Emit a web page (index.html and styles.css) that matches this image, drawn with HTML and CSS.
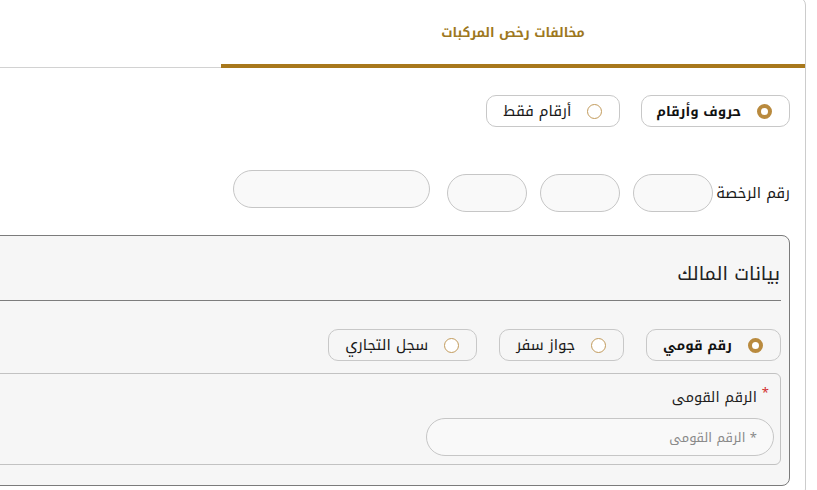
FILE: index.html
```html
<!DOCTYPE html>
<html lang="ar" dir="rtl">
<head>
<meta charset="utf-8">
<title>مخالفات رخص المركبات</title>
<link rel="stylesheet" href="styles.css">
</head>
<body>
<div class="card">
  <div class="tabbar">
    <div class="tab active">مخالفات رخص المركبات</div>
  </div>
  <div class="content">
    <div class="radio-row">
      <label class="pill selected"><span class="radio"></span><span class="pill-text">حروف وأرقام</span></label>
      <label class="pill"><span class="radio"></span><span class="pill-text">أرقام فقط</span></label>
    </div>
    <div class="plate-row">
      <span class="plate-label">رقم الرخصة</span>
      <input class="field small" type="text">
      <input class="field small" type="text">
      <input class="field small" type="text">
      <input class="field large" type="text">
    </div>
    <div class="owner">
      <div class="owner-title">بيانات المالك</div>
      <div class="radio-row owner-radios">
        <label class="pill selected"><span class="radio"></span><span class="pill-text">رقم قومي</span></label>
        <label class="pill"><span class="radio"></span><span class="pill-text">جواز سفر</span></label>
        <label class="pill"><span class="radio"></span><span class="pill-text">سجل التجاري</span></label>
      </div>
      <div class="inner">
        <div class="field-label"><span class="req">*</span> الرقم القومى</div>
        <input class="field national" type="text" placeholder="* الرقم القومى">
      </div>
    </div>
  </div>
</div>
</body>
</html>
```
FILE: styles.css
```css
* { box-sizing: border-box; }
html, body { margin: 0; padding: 0; background: #ffffff; }
html { overflow: hidden; height: 490px; }
body {
  direction: rtl;
  overflow: hidden;
  height: 490px;
  font-family: "Noto Kufi Arabic", "Noto Sans Arabic", "DejaVu Sans", sans-serif;
  color: #1a1a1a;
}
.card {
  margin: -3px 11px 0 -40px;
  height: 500px;
  border: 1px solid #cccccc;
  border-radius: 8px;
  background: #ffffff;
}
.tabbar {
  display: flex;
  height: 70px;
  border-bottom: 1px solid #d2d2d2;
}
.tab {
  width: 584px;
  display: flex;
  align-items: center;
  justify-content: center;
  padding-top: 3px;
  margin-bottom: -1px;
  font-size: 13px;
  font-weight: bold;
  color: #9d7720;
}
.tab.active { border-bottom: 4px solid #a8781c; }
.content { padding: 0 15px; }
.radio-row {
  display: flex;
  gap: 21px;
  margin-top: 27px;
}
.pill {
  display: flex;
  align-items: center;
  gap: 16px;
  height: 32px;
  padding: 0 17px 0 16px;
  border: 1px solid #c8c8c8;
  border-radius: 10px;
  font-size: 15px;
  color: #1a1a1a;
}
.pill.selected { padding-left: 14px; }
.pill.selected .pill-text { font-weight: bold; font-size: 13.5px; color: #111; }
.radio {
  width: 15px;
  height: 15px;
  border-radius: 50%;
  border: 1px solid #c29b5c;
  background: #ffffff;
  flex: none;
}
.pill.selected .radio { border: 4px solid #b98a3e; }
.plate-row {
  display: flex;
  align-items: flex-start;
  gap: 13px;
  margin-top: 43px;
}
.plate-label {
  margin-top: 4px;
  line-height: 38px;
  font-size: 15px;
  margin-left: -10px;
}
.field {
  height: 38px;
  border: 1px solid #c6c6c6;
  border-radius: 19px;
  background: #f9f9f9;
  font-family: inherit;
  outline: none;
}
.field.small { width: 80px; margin-top: 4px; }
.field.large { width: 197px; margin-right: 4px; }
.owner {
  margin-top: 23px;
  border: 1px solid #7b7b7b;
  border-radius: 8px;
  background: #f6f6f6;
  padding: 0 8px 20px;
}
.owner-title {
  padding: 25px 1px 13px 0;
  line-height: 26px;
  font-size: 19px;
  color: #222222;
  border-bottom: 1px solid #7d7d7d;
}
.owner-radios { margin-top: 28px; gap: 22px; }
.owner-radios .pill.selected { padding-left: 16px; }
.inner {
  margin-top: 12px;
  border: 1px solid #c2c2c2;
  border-radius: 6px;
  padding: 11px 6px 8px;
}
.field-label {
  line-height: 24px;
  font-size: 14.5px;
  color: #1f1f1f;
  padding-right: 5px;
}
.req {
  color: #d22f2f;
  font-size: 13px;
  vertical-align: top;
  line-height: 16px;
}
.field.national {
  display: block;
  width: 348px;
  margin-top: 9px;
  padding: 0 16px;
  font-size: 13px;
  direction: rtl;
  text-align: right;
}
.field.national::placeholder { color: #8a8a8a; }
```
